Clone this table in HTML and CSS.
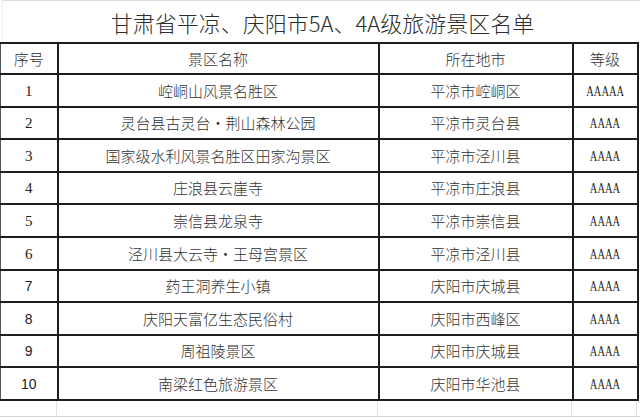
FILE: index.html
```html
<!DOCTYPE html>
<html lang="zh">
<head>
<meta charset="utf-8">
<title>甘肃省平凉、庆阳市5A、4A级旅游景区名单</title>
<link rel="stylesheet" href="styles.css">
</head>
<body>
<div class="sheet">
  <div class="title">甘肃省平凉、庆阳市5A、4A级旅游景区名单</div>
  <table class="list">
    <colgroup>
      <col class="c-no"><col class="c-name"><col class="c-city"><col class="c-grade">
    </colgroup>
    <thead>
      <tr><th>序号</th><th>景区名称</th><th>所在地市</th><th>等级</th></tr>
    </thead>
    <tbody>
      <tr><td class="num serif">1</td><td>崆峒山风景名胜区</td><td>平凉市崆峒区</td><td class="grade"><span>AAAAA</span></td></tr>
      <tr><td class="num serif">2</td><td>灵台县古灵台・荆山森林公园</td><td>平凉市灵台县</td><td class="grade"><span>AAAA</span></td></tr>
      <tr><td class="num serif">3</td><td>国家级水利风景名胜区田家沟景区</td><td>平凉市泾川县</td><td class="grade"><span>AAAA</span></td></tr>
      <tr><td class="num serif">4</td><td>庄浪县云崖寺</td><td>平凉市庄浪县</td><td class="grade"><span>AAAA</span></td></tr>
      <tr><td class="num serif">5</td><td>崇信县龙泉寺</td><td>平凉市崇信县</td><td class="grade"><span>AAAA</span></td></tr>
      <tr><td class="num serif">6</td><td>泾川县大云寺・王母宫景区</td><td>平凉市泾川县</td><td class="grade"><span>AAAA</span></td></tr>
      <tr><td class="num sans">7</td><td>药王洞养生小镇</td><td>庆阳市庆城县</td><td class="grade"><span>AAAA</span></td></tr>
      <tr><td class="num sans">8</td><td>庆阳天富亿生态民俗村</td><td>庆阳市西峰区</td><td class="grade"><span>AAAA</span></td></tr>
      <tr><td class="num sans">9</td><td>周祖陵景区</td><td>庆阳市庆城县</td><td class="grade"><span>AAAA</span></td></tr>
      <tr><td class="num sans">10</td><td>南梁红色旅游景区</td><td>庆阳市华池县</td><td class="grade"><span>AAAA</span></td></tr>
    </tbody>
  </table>
  <div class="tail">
    <div class="cell c1"></div><div class="cell c2"></div><div class="cell c3"></div><div class="cell c4"></div>
  </div>
</div>
</body>
</html>
```
FILE: styles.css
```css
html, body {
  margin: 0;
  padding: 0;
  background: #ffffff;
}
body {
  font-family: "Noto Sans CJK SC", "Liberation Serif", serif;
  color: #333333;
}
.sheet {
  width: 640px;
  height: 417px;
  overflow: hidden;
  background: #ffffff;
}
.title {
  height: 42px;
  border-top: 1px solid #dcdde2;
  border-left: 1px solid #eceef2;
  margin-left: 2px;
  box-sizing: border-box;
  display: flex;
  align-items: center;
  justify-content: center;
  font-size: 22px;
  font-weight: 300;
  color: #2e2e2e;
  padding-left: 2px;
  padding-top: 1px;
}
.list {
  border-collapse: collapse;
  table-layout: fixed;
  width: 637px;
}
.c-no { width: 57px; }
.c-name { width: 321px; }
.c-city { width: 194px; }
.c-grade { width: 65px; }
.list th, .list td {
  border: 2px solid #1e1e1e;
  padding: 0;
  text-align: center;
  vertical-align: middle;
  font-size: 15px;
  font-weight: 300;
  color: #333333;
  white-space: nowrap;
}
.list th {
  height: 29px;
  line-height: 20px;
}
.list td {
  height: 30px;
  line-height: 20px;
  padding-top: 0.6px;
}
.list th:first-child, .list td:first-child {
  border-left: 1px solid #555555;
}
.list td.serif {
  font-family: "Liberation Serif", serif;
  font-weight: 400;
  font-size: 15px;
  color: #222222;
}
.list td.sans {
  font-family: "Liberation Sans", sans-serif;
  font-weight: 400;
  font-size: 14px;
  color: #222222;
}
.list td.grade {
  font-family: "Liberation Serif", serif;
  font-weight: 400;
  font-size: 14.5px;
  color: #222222;
}
.list td.grade span {
  display: inline-block;
  transform: scaleX(0.72);
}
.tail {
  display: flex;
  height: 15px;
  border-bottom: 1px solid #d4d6dc;
}
.tail .cell {
  border-right: 1px solid #e2e4e8;
  box-sizing: border-box;
  height: 100%;
}
.tail .c1 { width: 57px; }
.tail .c2 { width: 321px; }
.tail .c3 { width: 194px; }
.tail .c4 { width: 65px; border-right-color: #dfe1e6; }
```
